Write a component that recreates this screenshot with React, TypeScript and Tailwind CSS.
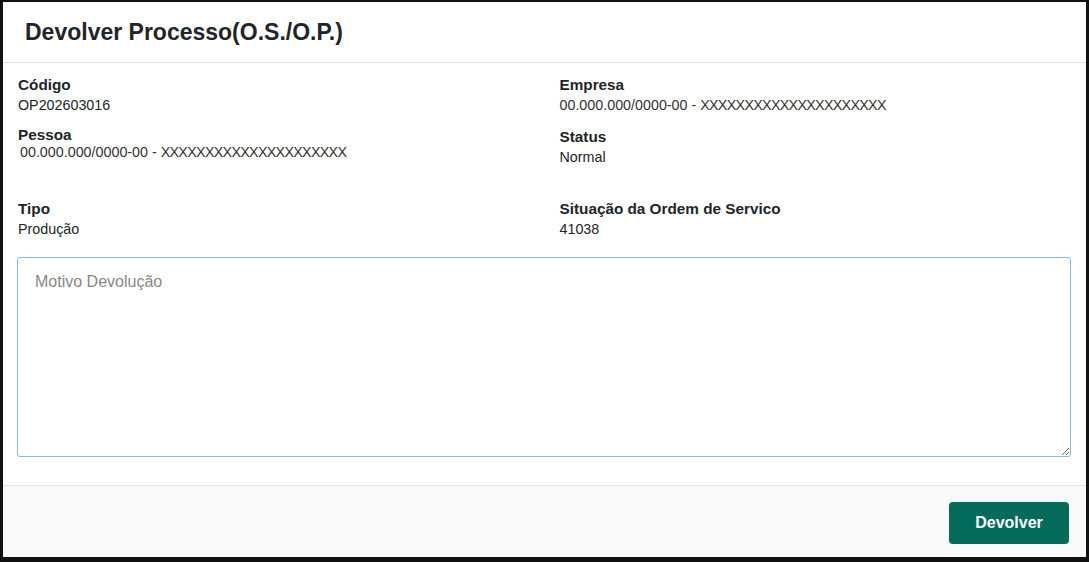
export default function App() {
    const font = { fontFamily: '"Liberation Sans", Arial, sans-serif' };

    // o trecho de X aparece mais estreito no original
    const doc = (
        <>
            00.000.000/0000-00 - <span className="tracking-[-0.7px]">XXXXXXXXXXXXXXXXXXXXX</span>
        </>
    );

    return (
        <div className="w-full h-[562px] bg-[#111111] pt-[2px] pl-[3px] pr-[3px] pb-[5px]" style={font}>
            {/* Modal */}
            <div className="flex flex-col h-full bg-white">
                {/* Header */}
                <div className="h-[61px] shrink-0 flex items-center px-[22px] border-b border-[#dee2e6]">
                    <h1 className="text-[23px] font-bold text-[#212529] leading-none">
                        Devolver Processo(O.S./O.P.)
                    </h1>
                </div>

                {/* Body */}
                <div className="flex-1 flex flex-col pt-[12px] px-[15px] border-b border-[#dee2e6]">
                    <div className="grid grid-cols-2 gap-x-[30px] text-[14.3px] text-[#212529]">
                        <div>
                            <div className="font-bold text-[15.3px] leading-[20px]">Código</div>
                            <div className="leading-5">OP202603016</div>
                        </div>
                        <div>
                            <div className="font-bold text-[15.3px] leading-[20px]">Empresa</div>
                            <div className="leading-5 text-[#333]">{doc}</div>
                        </div>
                    </div>

                    <div className="grid grid-cols-2 gap-x-[30px] text-[14.3px] text-[#212529] mt-[12px]">
                        <div>
                            <div className="font-bold text-[15.3px] leading-[16px]">Pessoa</div>
                            <div className="leading-[18px] pl-[2px] text-[#333]">{doc}</div>
                        </div>
                        <div>
                            <div className="font-bold text-[15.3px] leading-5">Status</div>
                            <div className="leading-5">Normal</div>
                        </div>
                    </div>

                    <div className="grid grid-cols-2 gap-x-[30px] text-[14.3px] text-[#212529] mt-[32px]">
                        <div>
                            <div className="font-bold text-[15.3px] leading-[20px]">Tipo</div>
                            <div className="leading-5">Produção</div>
                        </div>
                        <div>
                            <div className="font-bold text-[15.3px] leading-[20px]">Situação da Ordem de Servico</div>
                            <div className="leading-5">41038</div>
                        </div>
                    </div>

                    <textarea
                        placeholder="Motivo Devolução"
                        className="mt-[18px] ml-[-1px] w-[calc(100%+1px)] h-[200px] border border-[#80bde3] rounded-[3px] px-[17px] py-[12px] text-[16px] leading-6 text-[#212529] placeholder:text-[#888] outline-none resize-y"
                        style={font}
                    />
                </div>

                {/* Footer */}
                <div className="h-[71px] shrink-0 bg-[#f8f9fa] flex items-center justify-end px-[17px]">
                    <button className="w-[120px] h-[42px] mt-[2px] rounded-[4px] bg-[#046a5a] text-white font-bold text-[16px]">
                        Devolver
                    </button>
                </div>
            </div>
        </div>
    );
}
